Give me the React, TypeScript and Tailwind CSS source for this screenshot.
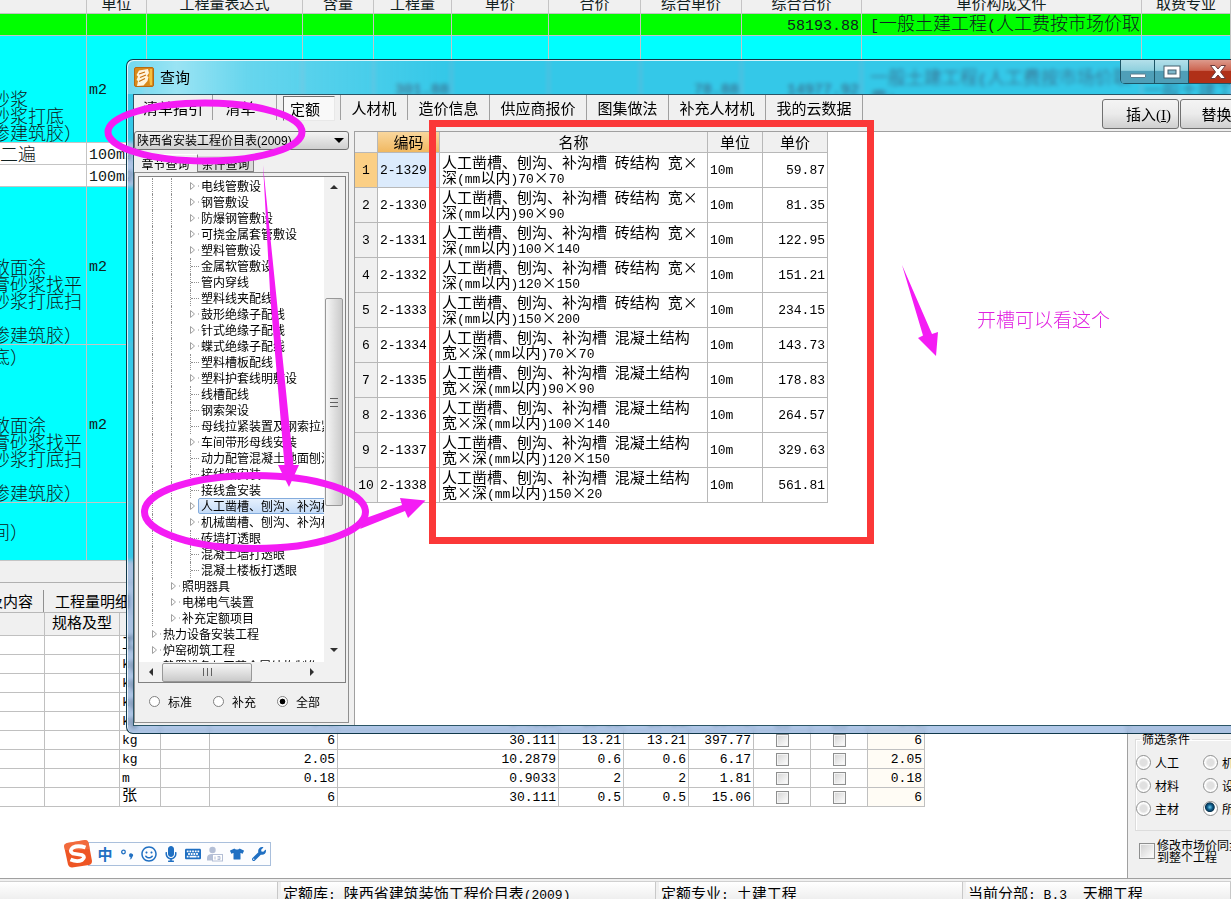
import React from "react";
import {
  FaKeyboard,
  FaMicrophone,
  FaRegSmile,
  FaTshirt,
  FaWrench,
} from "react-icons/fa";

/** Chinese text with its Latin runs and spaces set in the monospaced face. */
function Mixed({ text, large = false }: { text: string; large?: boolean }) {
  const parts = text.split(/([\x20-\x7e]+)/);
  return (
    <>
      {parts.map((p, i) =>
        i % 2 === 1 ? (
          <span
            key={i}
            className={`font-['Liberation_Mono',monospace] whitespace-pre ${large ? "text-[15px]" : "text-[13px]"}`}
          >
            {p}
          </span>
        ) : (
          <React.Fragment key={i}>{p}</React.Fragment>
        ),
      )}
    </>
  );
}

type BudgetRow = {
  height: string;
  tone: string;
  lines: string[];
  align: string;
  shift: string;
  unit: string;
  qty?: string;
  price?: string;
  total?: string;
  file?: string;
  major?: string;
};

const budgetHeads = [
  "", "单位", "工程量表达式", "含量", "工程量", "单价", "合价",
  "综合单价", "综合合价", "单价构成文件", "取费专业",
];

const budgetRows: BudgetRow[] = [
  { height: "h-[22px]", tone: "bg-[#00ff00]", lines: [], align: "align-middle", shift: "", unit: "", total: "58193.88", file: "[一般土建工程(人工费按市场价取" },
  { height: "h-[107px]", tone: "bg-[#00ffff]", lines: ["砂浆", "砂浆打底", "掺建筑胶）"], align: "align-bottom", shift: "-ml-2", unit: "m2", qty: "301.88", price: "78.88", total: "14977.92", file: "一般土建工程(人工费按市场价取费)", major: "一般土建工程" },
  { height: "h-[22px]", tone: "bg-white", lines: ["二遍"], align: "align-middle", shift: "", unit: "100m2" },
  { height: "h-[22px]", tone: "bg-white", lines: [], align: "align-middle", shift: "", unit: "100m2" },
  { height: "h-[158px]", tone: "bg-[#00ffff]", lines: ["散面涂", "膏砂浆找平", "砂浆打底扫", "", "掺建筑胶）"], align: "align-bottom", shift: "-ml-2", unit: "m2" },
  { height: "h-[158px]", tone: "bg-[#00ffff]", lines: ["底）", "", "", "", "散面涂", "膏砂浆找平", "砂浆打底扫", "", "掺建筑胶）"], align: "align-bottom", shift: "-ml-2", unit: "m2" },
  { height: "h-[58px]", tone: "bg-[#00ffff]", lines: ["间）"], align: "align-middle", shift: "-ml-2", unit: "" },
];

function BudgetTable() {
  const cell = "overflow-hidden border-r border-b border-[#c4c4c4] px-[2px] py-0 whitespace-nowrap";
  const mono = "pt-[3px] font-['Liberation_Mono','Noto_Sans_CJK_SC',monospace] text-[15px] leading-[17px]";
  return (
    <div className="-mt-2 shrink-0">
      <table className="w-full table-fixed border-separate border-spacing-0 text-[#102020]">
        <colgroup>
          <col className="w-[87px]" />
          <col className="w-[60px]" />
          <col className="w-[156px]" />
          <col className="w-[71px]" />
          <col className="w-[78px]" />
          <col className="w-[97px]" />
          <col className="w-[92px]" />
          <col className="w-[101px]" />
          <col className="w-[120px]" />
          <col className="w-[280px]" />
          <col />
        </colgroup>
        <thead>
          <tr className="h-[22px] bg-[#f0f0f0]">
            {budgetHeads.map((h, i) => (
              <th key={i} className={`${cell} text-[15px] leading-[20px] font-normal`}>
                {h}
              </th>
            ))}
          </tr>
        </thead>
        <tbody className="leading-[17px]">
          {budgetRows.map((r, i) => (
            <tr key={i} className={`${r.height} ${r.tone}`}>
              <td className={`${cell} ${r.align} pb-px pl-0 text-[18px] font-light`}>
                {r.lines.map((l, j) => (
                  <div key={j} className={`h-[17px] ${r.shift}`}>{l}</div>
                ))}
              </td>
              <td className={`${cell} ${mono}`}>{r.unit}</td>
              <td className={cell} />
              <td className={cell} />
              <td className={`${cell} ${mono} text-right`}>{r.qty}</td>
              <td className={cell} />
              <td className={cell} />
              <td className={`${cell} ${mono} text-right`}>{r.price}</td>
              <td className={`${cell} ${mono} text-right`}>{r.total}</td>
              <td className="overflow-hidden border-r border-b border-[#c4c4c4] py-0 pl-2 text-[18px] font-light break-all">
                <Mixed text={r.file ?? ""} large />
              </td>
              <td className={`${cell} text-[18px] font-light`}>{r.major}</td>
            </tr>
          ))}
        </tbody>
      </table>
    </div>
  );
}

const materialRows: string[][] = [
  ["工日", "", "", "", "", "", ""],
  ["kg", "", "", "", "", "", ""],
  ["kg", "", "", "", "", "", ""],
  ["kg", "", "", "", "", "", ""],
  ["kg", "0.6", "3.0111", "13.21", "13.21", "39.78", "0.6"],
  ["kg", "6", "30.111", "13.21", "13.21", "397.77", "6"],
  ["kg", "2.05", "10.2879", "0.6", "0.6", "6.17", "2.05"],
  ["m", "0.18", "0.9033", "2", "2", "1.81", "0.18"],
  ["张", "6", "30.111", "0.5", "0.5", "15.06", "6"],
];

function GridCheck({ label }: { label: string }) {
  return (
    <input
      type="checkbox"
      aria-label={label}
      className="mx-auto block size-[13px] appearance-none border border-[#8e8f8f] bg-linear-to-br from-[#d4d4d4] to-white ring-1 ring-[#f4f4f4] ring-inset"
    />
  );
}

function MaterialTable() {
  const cell = "overflow-hidden border-r border-b border-[#c0c0c0] px-[2px] py-0 whitespace-nowrap";
  const text = `${cell} pt-[2px]`;
  const num = `${text} text-right`;
  return (
    <table className="w-[925px] table-fixed border-separate border-spacing-0 font-['Liberation_Mono','Noto_Sans_CJK_SC',monospace] text-[13px] leading-[16px]">
      <colgroup>
        <col className="w-[45px]" />
        <col className="w-[75px]" />
        <col className="w-[41px]" />
        <col className="w-[49px]" />
        <col className="w-[128px]" />
        <col className="w-[221px]" />
        <col className="w-[65px]" />
        <col className="w-[65px]" />
        <col className="w-[65px]" />
        <col className="w-[57px]" />
        <col className="w-[57px]" />
        <col className="w-[57px]" />
      </colgroup>
      <thead>
        <tr className="h-[23px] bg-[#f0f0f0]">
          <th className={cell} />
          <th className={`${text} text-[15px] font-normal`}>规格及型</th>
          {Array.from({ length: 10 }, (_, i) => (
            <th key={i} className={cell} />
          ))}
        </tr>
      </thead>
      <tbody>
        {materialRows.map((r, i) => (
          <tr key={i} className="h-[19px]">
            <td className={cell} />
            <td className={cell} />
            <td className={r[0] === "张" || r[0] === "工日" ? `${cell} text-[15px]` : text}>{r[0]}</td>
            <td className={cell} />
            <td className={num}>{r[1]}</td>
            <td className={num}>{r[2]}</td>
            <td className={num}>{r[3]}</td>
            <td className={num}>{r[4]}</td>
            <td className={num}>{r[5]}</td>
            <td className={cell}><GridCheck label={`暂估 ${i + 1}`} /></td>
            <td className={cell}><GridCheck label={`锁定 ${i + 1}`} /></td>
            <td className={`${num} bg-[#fffcf5]`}>{r[6]}</td>
          </tr>
        ))}
      </tbody>
    </table>
  );
}

function FilterPanel() {
  const options = ["人工", "机械", "材料", "设备", "主材", "所有"];
  return (
    <aside className="flex w-[103px] shrink-0 flex-col justify-end overflow-hidden bg-[#f0f0f0] pb-[15px] pl-[7px] text-[12px]">
      <fieldset className="mb-2 w-[150px] border border-[#dcdcdc] pb-[10px] shadow-[inset_1px_1px_0_white]">
        <legend className="ml-1 px-[2px] leading-[16px]">筛选条件</legend>
        <div className="grid grid-cols-[67px_67px] pt-1">
          {options.map((o) => (
            <label key={o} className="flex h-[23px] items-center gap-1">
              <input
                type="radio"
                name="filter"
                defaultChecked={o === "所有"}
                className="size-[15px] shrink-0 appearance-none rounded-full border border-[#8e8f8f] bg-[radial-gradient(circle,#e0e0e0_35%,white_60%)] checked:bg-[radial-gradient(circle_at_45%_40%,#6fd0f0_0%,#0d5a8a_25%,#0a3550_42%,white_50%)]"
              />
              {o}
            </label>
          ))}
        </div>
      </fieldset>
      <label className="flex w-[150px] items-center gap-[2px] pl-1 leading-[12px]">
        <input
          type="checkbox"
          className="size-[16px] shrink-0 appearance-none border border-[#8e8f8f] bg-linear-to-br from-[#cfcfcf] to-white ring-1 ring-[#f4f4f4] ring-inset"
        />
        <span>
          修改市场价同步
          <br />
          到整个工程
        </span>
      </label>
    </aside>
  );
}

function StatusBar() {
  const cell = "h-6 shrink-0 border-r border-[#c8c8c8] bg-linear-to-b from-white to-[#e8e8e8] pl-[2px] whitespace-pre";
  return (
    <footer className="flex h-[18px] shrink-0 gap-[3px] overflow-hidden border-t border-[#d0d0d0] bg-[#f0f0f0] text-[15px] leading-[22px]">
      <div className={`${cell} w-[278px]`} />
      <div className={`${cell} w-[375px]`}><Mixed text="定额库: 陕西省建筑装饰工程价目表(2009)" /></div>
      <div className={`${cell} w-[304px]`}><Mixed text="定额专业: 土建工程" /></div>
      <div className={`${cell} grow`}><Mixed text="当前分部: B.3  天棚工程" /></div>
    </footer>
  );
}

function ImeBar() {
  const slot = "flex w-[22px] items-center justify-center";
  return (
    <div className="absolute top-[839px] left-[63px] flex items-center">
      <svg viewBox="0 0 30 30" className="z-10 size-[30px]" aria-hidden="true">
        <path d="M4 4 22 1q3 0 3.600 3L29 22q0 3-3 4L9 28.500q-3 0-4-3L1 7q0-2 3-3Z" fill="#ee5524" />
        <path d="M4 4 22 1q3 0 3.600 3l1.400 6Q12 12 2 11L1 7q0-2 3-3Z" fill="#f5784c" opacity=".6" />
        <path d="M22.500 8.500Q15 6 10 8.500 5.500 12 10 14.500l9 1.500q4 2 0 5-5 2.500-11.500-.5" fill="none" stroke="#fff" strokeWidth="3.800" />
      </svg>
      <div className="-ml-[5px] flex h-6 border border-[#a9bfdc] bg-[#fcfdff] pl-[5px] text-[16px] text-[#1f6fc2]">
        <span className={`${slot} text-[15px] font-bold`}>中</span>
        <span className={slot}>
          <svg viewBox="0 0 14 14" className="size-[14px]" aria-hidden="true">
            <circle cx="3.500" cy="5" r="1.800" fill="none" stroke="currentColor" strokeWidth="1.300" />
            <path d="M9 8a2 2 0 1 1 3.600 1.500Q12 12 9.500 12.500q1.200-1 1.200-2Q9 10 9 8Z" fill="currentColor" />
          </svg>
        </span>
        <span className={slot}><FaRegSmile /></span>
        <span className={slot}><FaMicrophone /></span>
        <span className={slot}><FaKeyboard /></span>
        <span className={`${slot} text-[#b4bfd6]`}>
          <svg viewBox="0 0 16 16" className="size-4" aria-hidden="true">
            <circle cx="5.500" cy="4" r="3.200" fill="currentColor" />
            <path d="M0 14.500V12q0-3.500 4-4h3v6.500Z" fill="currentColor" />
            <rect x="5.500" y="8.500" width="10" height="6.500" fill="#fff" stroke="currentColor" />
            <path d="M8 10.500v3M10.500 10.500h2.500v1.500h-2.500M13 12v1.500h-2.500" stroke="currentColor" fill="none" />
          </svg>
        </span>
        <span className={`${slot} text-[14px]`}><FaTshirt /></span>
        <span className={`${slot} text-[14px]`}><FaWrench /></span>
      </div>
    </div>
  );
}

type Node = { text: string; depth: 1 | 2 | 3; open?: boolean; selected?: boolean };

const nodes: Node[] = [
  { text: "电线管敷设", depth: 3, open: true },
  { text: "钢管敷设", depth: 3, open: true },
  { text: "防爆钢管敷设", depth: 3, open: true },
  { text: "可挠金属套管敷设", depth: 3, open: true },
  { text: "塑料管敷设", depth: 3, open: true },
  { text: "金属软管敷设", depth: 3 },
  { text: "管内穿线", depth: 3 },
  { text: "塑料线夹配线", depth: 3 },
  { text: "鼓形绝缘子配线", depth: 3, open: true },
  { text: "针式绝缘子配线", depth: 3, open: true },
  { text: "蝶式绝缘子配线", depth: 3, open: true },
  { text: "塑料槽板配线", depth: 3 },
  { text: "塑料护套线明敷设", depth: 3, open: true },
  { text: "线槽配线", depth: 3 },
  { text: "钢索架设", depth: 3 },
  { text: "母线拉紧装置及钢索拉紧装置", depth: 3 },
  { text: "车间带形母线安装", depth: 3, open: true },
  { text: "动力配管混凝土地面刨沟", depth: 3 },
  { text: "接线箱安装", depth: 3 },
  { text: "接线盒安装", depth: 3 },
  { text: "人工凿槽、刨沟、补沟槽", depth: 3, open: true, selected: true },
  { text: "机械凿槽、刨沟、补沟槽", depth: 3, open: true },
  { text: "砖墙打透眼", depth: 3 },
  { text: "混凝土墙打透眼", depth: 3 },
  { text: "混凝土楼板打透眼", depth: 3 },
  { text: "照明器具", depth: 2, open: true },
  { text: "电梯电气装置", depth: 2, open: true },
  { text: "补充定额项目", depth: 2, open: true },
  { text: "热力设备安装工程", depth: 1, open: true },
  { text: "炉窑砌筑工程", depth: 1, open: true },
  { text: "静置设备与工艺金属结构制作", depth: 1, open: true },
];

function TreeRow({ node }: { node: Node }) {
  return (
    <li className="flex h-4 items-center pl-[13px]">
      {Array.from({ length: node.depth - 1 }, (_, i) => (
        <span key={i} className="h-4 w-[19px] shrink-0 border-l border-dotted border-[#909090]" />
      ))}
      {node.open ? (
        <svg viewBox="0 0 11 16" className="h-4 w-[11px] shrink-0" aria-hidden="true">
          <path d="M.5 4.500v7L4.500 8Z" fill="#fff" stroke="#a0a0a0" />
          <path d="M8 8h1" stroke="#909090" />
        </svg>
      ) : (
        <span className="flex h-4 w-[11px] shrink-0 items-center border-l border-dotted border-[#909090]">
          <span className="w-2 border-t border-dotted border-[#909090]" />
        </span>
      )}
      <button
        type="button"
        className={
          node.selected
            ? "-ml-[3px] h-4 rounded-[2px] border border-[#84acdd] bg-linear-to-b from-[#e6f0fd] to-[#c4dbf8] pl-[2px] leading-[14px] whitespace-nowrap"
            : "h-4 leading-4 whitespace-nowrap"
        }
      >
        {node.text}
      </button>
    </li>
  );
}

function Arrow({ d }: { d: string }) {
  return (
    <svg viewBox="0 0 10 10" className="size-[10px]" aria-hidden="true">
      <path d={d} fill="#303030" />
    </svg>
  );
}

function TreePanel() {
  return (
    <div className="flex w-[220px] shrink-0 flex-col pr-[5px] text-[12px]">
      <div className="relative flex">
        <select
          aria-label="定额库"
          className="h-[19px] w-full appearance-none rounded-[3px] border border-[#707070] bg-linear-to-b from-[#f4f4f4] to-[#cfcfcf] pl-[2px] font-['Liberation_Sans','Noto_Sans_CJK_SC',sans-serif] text-[12px] leading-[16px]"
        >
          <option>陕西省安装工程价目表(2009)</option>
        </select>
        <svg viewBox="0 0 10 5" className="pointer-events-none absolute top-[7px] right-[5px] h-[5px] w-[10px]" aria-hidden="true">
          <path d="M0 0h10L5 5Z" fill="#000" />
        </svg>
      </div>
      <div className="mt-1 flex items-end" role="tablist">
        <button type="button" role="tab" aria-selected="true" className="h-[18px] w-[64px] border-t border-r border-t-white border-r-[#808080] leading-[14px]">
          章节查询
        </button>
        <button type="button" role="tab" aria-selected="false" className="h-[16px] w-[56px] border-r border-b border-[#808080] bg-[#dadada] leading-[14px]">
          条件查询
        </button>
      </div>
      <div className="flex flex-col border border-[#909090] p-[2px] pt-[3px] pl-[3px]">
        <div className="border border-[#808080] bg-white">
          <div className="flex h-[485px]">
            <ul className="min-w-0 grow overflow-hidden pt-px">
              {nodes.map((n) => (
                <TreeRow key={n.text} node={n} />
              ))}
            </ul>
            <div className="flex w-[21px] shrink-0 flex-col items-center bg-[#f1f1f1] pr-[2px]">
              <span className="flex h-[20px] items-center"><Arrow d="M1 7h8L5 3Z" /></span>
              <span className="h-[101px]" />
              <span className="flex h-[208px] w-[18px] flex-col items-center justify-center gap-[3px] rounded-[2px] border border-[#989898] bg-linear-to-r from-[#f6f6f6] to-[#cacaca]">
                <i className="h-px w-2 bg-[#606060]" />
                <i className="h-px w-2 bg-[#606060]" />
                <i className="h-px w-2 bg-[#606060]" />
              </span>
              <span className="grow" />
              <span className="flex h-[24px] items-center"><Arrow d="M1 3h8L5 7Z" /></span>
            </div>
          </div>
          <div className="flex h-[20px] items-center bg-[#f1f1f1]">
            <span className="flex w-[23px] justify-center"><Arrow d="M7 1v8L3 5Z" /></span>
            <span className="flex h-[19px] w-[90px] items-center justify-center gap-[3px] rounded-[2px] border border-[#989898] bg-linear-to-b from-[#f6f6f6] to-[#cacaca]">
              <i className="h-2 w-px bg-[#606060]" />
              <i className="h-2 w-px bg-[#606060]" />
              <i className="h-2 w-px bg-[#606060]" />
            </span>
            <span className="grow" />
            <span className="mr-[28px] flex"><Arrow d="M3 1v8L7 5Z" /></span>
          </div>
        </div>
        <div className="flex h-[37px] items-center gap-[21px] pl-[11px]">
          {["标准", "补充", "全部"].map((o) => (
            <label key={o} className="flex items-center gap-2">
              <input
                type="radio"
                name="scope"
                defaultChecked={o === "全部"}
                className="size-[11px] appearance-none rounded-full border border-[#808080] bg-white checked:bg-[radial-gradient(circle,black_40%,white_50%)]"
              />
              {o}
            </label>
          ))}
        </div>
      </div>
    </div>
  );
}

const brick = "人工凿槽、刨沟、补沟槽 砖结构 宽×";
const concrete = "人工凿槽、刨沟、补沟槽 混凝土结构";

const quotas: [string, string, string, string][] = [
  ["2-1329", brick, "深(mm以内)70×70", "59.87"],
  ["2-1330", brick, "深(mm以内)90×90", "81.35"],
  ["2-1331", brick, "深(mm以内)100×140", "122.95"],
  ["2-1332", brick, "深(mm以内)120×150", "151.21"],
  ["2-1333", brick, "深(mm以内)150×200", "234.15"],
  ["2-1334", concrete, "宽×深(mm以内)70×70", "143.73"],
  ["2-1335", concrete, "宽×深(mm以内)90×90", "178.83"],
  ["2-1336", concrete, "宽×深(mm以内)100×140", "264.57"],
  ["2-1337", concrete, "宽×深(mm以内)120×150", "329.63"],
  ["2-1338", concrete, "宽×深(mm以内)150×20", "561.81"],
];

function QuotaTable() {
  const cell = "overflow-hidden border-r border-b border-[#b8b8b8] px-[2px] py-0 whitespace-nowrap";
  const mono = "pt-[2px] font-['Liberation_Mono',monospace] text-[13px]";
  const head = `${cell} text-[15px] leading-[18px] font-normal`;
  return (
    <table className="w-[473px] table-fixed border-separate border-spacing-0">
      <colgroup>
        <col className="w-[23px]" />
        <col className="w-[62px]" />
        <col className="w-[268px]" />
        <col className="w-[55px]" />
        <col className="w-[65px]" />
      </colgroup>
      <thead>
        <tr className="h-[21px] bg-[#f0f0f0]">
          <th className={head} />
          <th className={`${head} bg-linear-to-b from-[#f9d79d] to-[#f0b860]`}>编码</th>
          <th className={head}>名称</th>
          <th className={head}>单位</th>
          <th className={head}>单价</th>
        </tr>
      </thead>
      <tbody>
        {quotas.map(([code, a, b, price], i) => (
          <tr key={code} className="h-[35px]">
            <th scope="row" className={`${cell} ${mono} font-normal ${i === 0 ? "bg-[#fbcf85]" : "bg-[#f0f0f0]"}`}>
              {i + 1}
            </th>
            <td className={`${cell} ${mono} ${i === 0 ? "bg-[#dcebfc]" : ""}`}>{code}</td>
            <td className={`${cell} pb-[3px] text-[15px]`}>
              <div className="h-[15px] leading-[15px]"><Mixed text={a} /></div>
              <div className="h-[15px] leading-[15px]"><Mixed text={b} /></div>
            </td>
            <td className={`${cell} ${mono}`}>10m</td>
            <td className={`${cell} ${mono} text-right`}>{price}</td>
          </tr>
        ))}
      </tbody>
    </table>
  );
}

function TitleBar() {
  const btn = "flex shrink-0 items-center justify-center border-r border-b border-[#1d5566]";
  return (
    <header className="flex h-[34px] items-start bg-[linear-gradient(to_right,rgba(255,255,255,.3)_0,rgba(255,255,255,.5)_50px,rgba(255,255,255,.25)_120px,rgba(255,255,255,0)_320px)]">
      <svg viewBox="0 0 20 20" className="mt-[7px] ml-[7px] size-5" aria-hidden="true">
        <rect x=".5" y=".5" width="19" height="19" rx="1.500" fill="#d98a1a" stroke="#b86a10" />
        <path d="M16 2h2v16h-2l-1-8Z" fill="#f6c040" />
        <path d="M5 3.500 14 2l1 4-2 3 1.500 1-1 4-4 4.500L3 19l1-5-1.500-1L4 9.500 2.500 8Z" fill="#fff4dc" />
        <path d="M5 7 11 5M6 10.500l6-2.500M5 14.500l6-3" stroke="#c8700c" strokeWidth="1.200" />
      </svg>
      <h1 className="ml-[6px] pt-[5px] text-[15px] leading-6">查询</h1>
      <div className="ml-auto flex h-6 w-[111px] overflow-hidden rounded-bl-[5px] border-l border-[#1d5566] text-white">
        <button type="button" aria-label="最小化" className={`${btn} w-[34px] bg-linear-to-b from-[#b4e0ea] via-[#8fd0de] via-45% to-[#4f9fb8] to-50%`}>
          <svg viewBox="0 0 16 16" className="size-4" aria-hidden="true">
            <rect x=".5" y="10" width="15" height="3.500" rx=".5" fill="#fff" stroke="#5c7f90" />
          </svg>
        </button>
        <button type="button" aria-label="最大化" className={`${btn} w-[34px] bg-linear-to-b from-[#b4e0ea] via-[#8fd0de] via-45% to-[#4f9fb8] to-50%`}>
          <svg viewBox="0 0 18 14" className="h-[14px] w-[18px]" aria-hidden="true">
            <rect x="1" y="1" width="16" height="12" fill="#fff" stroke="#45606e" />
            <rect x="5" y="5" width="8" height="4" fill="#7fb8cc" stroke="#45606e" />
          </svg>
        </button>
        <button type="button" aria-label="关闭" className={`${btn} w-[58px] bg-linear-to-b from-[#dc9a8c] via-[#cc6450] via-45% to-[#b03018] to-50%`}>
          <svg viewBox="0 0 18 16" className="h-4 w-[18px]" aria-hidden="true">
            <path d="M1.500 1.500h4.500l3 3.500 3-3.500h4.500L11.500 8l5 6.500H12L9 11l-3 3.500H1.500l5-6.500Z" fill="#fff" stroke="#6b3a3a" />
          </svg>
        </button>
      </div>
    </header>
  );
}

function TabBar() {
  const tab = "h-[25px] shrink-0 border-r border-[#a0a0a0]";
  const action = "h-[30px] shrink-0 rounded-[3px] border border-[#707070] bg-linear-to-b from-[#f4f4f4] via-[#ebebeb] via-50% to-[#cfcfcf] text-[15px]";
  return (
    <div className="flex h-9 text-[15px] leading-6">
      <nav className="flex">
        <button type="button" className={`${tab} w-[79px]`}>清单指引</button>
        <button type="button" className={`${tab} w-[64px] pr-2`}>清单</button>
        <span className="w-[6px]" />
        <button
          type="button"
          className="mt-px h-[25px] w-[52px] border border-[#e8e8e8] border-t-[#707070] border-l-[#707070] bg-[#f9f9f9] pr-2 leading-[23px]"
        >
          定额
        </button>
        <span className={`${tab} w-[6px]`} />
        <button type="button" className={`${tab} w-[67px]`}>人材机</button>
        <button type="button" className={`${tab} w-[82px]`}>造价信息</button>
        <button type="button" className={`${tab} w-[97px]`}>供应商报价</button>
        <button type="button" className={`${tab} w-[82px]`}>图集做法</button>
        <button type="button" className={`${tab} w-[97px]`}>补充人材机</button>
        <button type="button" className={`${tab} w-[97px]`}>我的云数据</button>
      </nav>
      <div className="mt-1 ml-auto flex w-[129px] gap-px overflow-hidden">
        <button type="button" className={`${action} w-[77px] pl-4`}>
          插入<span className="font-['Liberation_Serif',serif]">(<u>I</u>)</span>
        </button>
        <button type="button" className={`${action} w-[77px] pl-4`}>
          替换<span className="font-['Liberation_Serif',serif]">(<u>R</u>)</span>
        </button>
      </div>
    </div>
  );
}

function QueryDialog() {
  return (
    <section
      role="dialog"
      aria-label="查询"
      className="absolute top-[59px] right-0 left-[126px] overflow-hidden rounded-l-[7px] border border-r-0 border-[#10384a] bg-[rgba(102,147,210,0.51)] pb-[7px] shadow-[inset_1px_1px_0_rgba(255,255,255,0.8)] backdrop-blur-[2px]"
    >
      <TitleBar />
      <div className="ml-[6px] border border-r-0 border-[#2b5566] bg-[#f0f0f0]">
        <TabBar />
        <div className="flex h-[594px]">
          <TreePanel />
          <div className="min-w-0 grow border-t border-l border-[#a0a0a0] bg-white">
            <QuotaTable />
          </div>
        </div>
      </div>
    </section>
  );
}

function Annotations() {
  return (
    <>
      <svg className="pointer-events-none absolute top-0 left-0 h-[899px] w-[1231px]" viewBox="0 0 1231 899" aria-hidden="true">
        <rect x="432.500" y="123.500" width="438" height="417" fill="none" stroke="#fb3838" strokeWidth="7" />
        <g fill="none" stroke="#f41cf4" strokeWidth="7">
          <ellipse cx="205" cy="132" rx="97" ry="29" />
          <ellipse cx="255" cy="512" rx="110.500" ry="36.500" />
        </g>
        <g fill="#f41cf4">
          <path d="M263 165 293.500 465H299L289 487 278 465H284.500L270.500 300Z" />
          <path d="M360 529 405 511 408 518 425.500 500.500 400 498 402 505 366 518Z" />
          <path d="M902 265 932 334 938 332 936 356 918 338 923 335.500Z" />
        </g>
      </svg>
      <p className="absolute top-[307px] left-[977px] text-[19px] leading-6 font-light text-[#e020e0]">开槽可以看这个</p>
    </>
  );
}

export default function App() {
  return (
    <div className="relative flex h-screen flex-col overflow-hidden bg-white font-['Noto_Sans_CJK_SC',sans-serif] text-black" lang="zh-CN">
      <BudgetTable />
      <div className="h-[22px] shrink-0 border-b border-[#b0b0b0] bg-[#f0f0f0]" />
      <main className="flex min-h-0 grow border-b border-[#a0a0a0]">
        <div className="min-w-0 grow overflow-hidden border-r border-[#a0a0a0]">
          <nav className="flex h-[30px] items-center border-b border-[#b8b8b8] bg-[#f0f0f0] pt-[6px] text-[15px]">
            <button type="button" className="-ml-[12px] h-[22px] w-[56px] border-r border-[#909090] pr-[10px] leading-[22px] whitespace-nowrap">
              及内容
            </button>
            <button type="button" className="ml-[11px] leading-[22px]">工程量明细</button>
          </nav>
          <MaterialTable />
        </div>
        <FilterPanel />
      </main>
      <div className="h-[2px] shrink-0 bg-[#f0f0f0]" />
      <StatusBar />
      <ImeBar />
      <QueryDialog />
      <Annotations />
    </div>
  );
}
